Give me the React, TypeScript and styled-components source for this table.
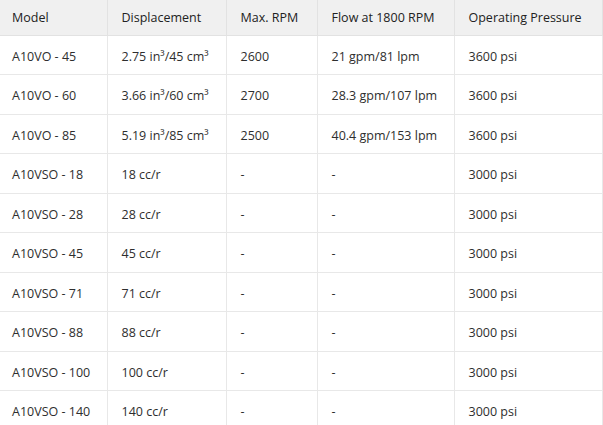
import * as React from "react";
import styled, { createGlobalStyle } from "styled-components";

const GlobalStyle = createGlobalStyle`
  html, body {
    margin: 0;
    padding: 0;
    background: #ffffff;
  }
`;

type Row = {
  model: string;
  displacement: string;
  rpm: string;
  flow: string;
  pressure: string;
};

const rows: Row[] = [
  { model: "A10VO - 45", displacement: "2.75 in³/45 cm³", rpm: "2600", flow: "21 gpm/81 lpm", pressure: "3600 psi" },
  { model: "A10VO - 60", displacement: "3.66 in³/60 cm³", rpm: "2700", flow: "28.3 gpm/107 lpm", pressure: "3600 psi" },
  { model: "A10VO - 85", displacement: "5.19 in³/85 cm³", rpm: "2500", flow: "40.4 gpm/153 lpm", pressure: "3600 psi" },
  { model: "A10VSO - 18", displacement: "18 cc/r", rpm: "-", flow: "-", pressure: "3000 psi" },
  { model: "A10VSO - 28", displacement: "28 cc/r", rpm: "-", flow: "-", pressure: "3000 psi" },
  { model: "A10VSO - 45", displacement: "45 cc/r", rpm: "-", flow: "-", pressure: "3000 psi" },
  { model: "A10VSO - 71", displacement: "71 cc/r", rpm: "-", flow: "-", pressure: "3000 psi" },
  { model: "A10VSO - 88", displacement: "88 cc/r", rpm: "-", flow: "-", pressure: "3000 psi" },
  { model: "A10VSO - 100", displacement: "100 cc/r", rpm: "-", flow: "-", pressure: "3000 psi" },
  { model: "A10VSO - 140", displacement: "140 cc/r", rpm: "-", flow: "-", pressure: "3000 psi" },
];

const columns = [
  { title: "Model", width: 107 },
  { title: "Displacement", width: 119 },
  { title: "Max. RPM", width: 91 },
  { title: "Flow at 1800 RPM", width: 137 },
  { title: "Operating Pressure", width: 148 },
];

const App = () => (
  <>
    <GlobalStyle />
    <SpecTable>
      <colgroup>
        {columns.map((c) => (
          <col key={c.title} style={{ width: c.width }} />
        ))}
      </colgroup>
      <thead>
        <tr>
          {columns.map((c) => (
            <HeadCell key={c.title}>{c.title}</HeadCell>
          ))}
        </tr>
      </thead>
      <tbody>
        {rows.map((r) => (
          <tr key={r.model}>
            <Cell>{r.model}</Cell>
            <Cell>{r.displacement}</Cell>
            <Cell>{r.rpm}</Cell>
            <Cell>{r.flow}</Cell>
            <Cell>{r.pressure}</Cell>
          </tr>
        ))}
      </tbody>
    </SpecTable>
  </>
);

const SpecTable = styled.table`
  width: 602px;
  table-layout: fixed;
  border-collapse: collapse;
  font-family: "Open Sans", "Noto Sans", sans-serif;
  font-size: 12.5px;
  color: #2e2e2e;
`;

const HeadCell = styled.th`
  box-sizing: border-box;
  height: 35px;
  padding: 1px 8px 0 14px;
  text-align: left;
  font-weight: normal;
  color: #222222;
  background: #f0f0f0;
  border-right: 1px solid #e2e2e2;
  border-bottom: 1px solid #e2e2e2;
  white-space: nowrap;

  &:first-child {
    padding-left: 12px;
  }
`;

const Cell = styled.td`
  box-sizing: border-box;
  height: 39.5px;
  padding: 3px 8px 0 14px;
  text-align: left;
  border-right: 1px solid #e8e8e8;
  border-bottom: 1px solid #e8e8e8;
  white-space: nowrap;

  &:first-child {
    padding-left: 12px;
  }
`;

export default App;
